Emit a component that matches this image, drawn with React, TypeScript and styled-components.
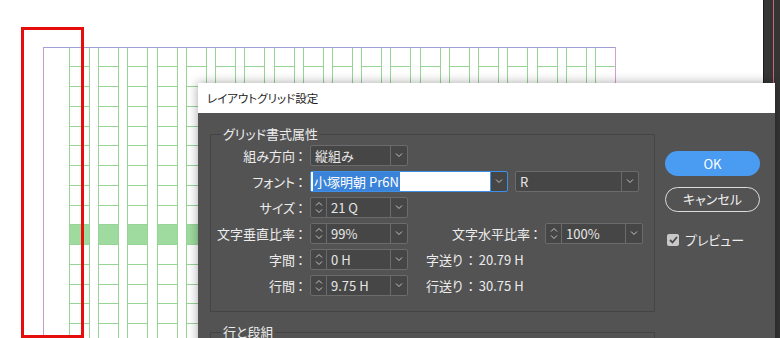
import React from 'react';
import styled, {createGlobalStyle} from 'styled-components';

const GlobalStyle = createGlobalStyle`
  html, body {
    margin: 0;
    padding: 0;
    background: #fff;
  }
  body {
    font-family: "Noto Sans CJK JP", "Noto Sans", sans-serif;
  }
`;

const Stage = styled.div`
  position: relative;
  display: flex;
  width: 780px;
  height: 338px;
  overflow: hidden;
  background: #fff;
`;

const Canvas = styled.svg`
  display: block;
  flex: 0 0 763px;
  height: 338px;
`;

const Rail = styled.div`
  flex: 1;
  display: flex;
  padding-left: 9px;
  background: #353535;
  border-left: 1px solid #1b1b1b;
`;

const RailLine = styled.div`
  width: 1px;
  background: #c56a7c;
`;

const Dialog = styled.div`
  position: absolute;
  left: 198px;
  top: 83px;
  width: 577px;
  height: 290px;
  background: #535353;
  box-shadow: 0 0 10px rgba(0, 0, 0, .35);
  font-feature-settings: "palt";
  color: #ececec;
`;

const TitleBar = styled.div`
  height: 30px;
  padding-left: 9px;
  background: #fff;
  color: #1e1e1e;
  font-size: 11.5px;
  line-height: 30px;
`;

const Body = styled.div`
  display: flex;
  padding-left: 12px;
`;

const Main = styled.div`
  width: 445px;
`;

const Side = styled.div`
  display: flex;
  flex-direction: column;
  width: 95px;
  margin-left: 10px;
  padding-top: 38px;
`;

interface GroupProps {
  $top: number
}

const Group = styled.fieldset<GroupProps>`
  margin: ${p => p.$top}px 0 0;
  padding: 0 0 15px;
  min-width: 0;
  border: 1px solid #444;
  border-radius: 1px;
`;

const Legend = styled.legend`
  margin-left: 10px;
  padding: 0 2px;
  font-size: 13px;
  line-height: 16px;
  color: #ececec;
`;

const Rows = styled.div`
  display: flex;
  flex-direction: column;
  gap: 5px;
  padding-top: 3px;
`;

const Row = styled.div`
  display: flex;
  align-items: center;
  height: 21px;
`;

interface LabelProps {
  $width?: number
}

const Label = styled.div<LabelProps>`
  box-sizing: border-box;
  width: ${p => p.$width ?? 99}px;
  padding-right: 4px;
  text-align: right;
  font-size: 13px;
  white-space: nowrap;
`;

interface ColonProps {
  $wide?: boolean
}

const Colon = styled.span<ColonProps>`
  display: inline-block;
  width: ${p => p.$wide ? 16 : 11}px;
  text-align: center;
`;

const Info = styled.div`
  margin-left: 18px;
  font-size: 13px;
  white-space: nowrap;
`;

interface FieldProps {
  $width: number
  $focus?: boolean
  $gap?: number
}

const Field = styled.div<FieldProps>`
  box-sizing: border-box;
  display: flex;
  width: ${p => p.$width}px;
  height: 21px;
  margin-left: ${p => p.$gap ?? 0}px;
  background: #464646;
  border: 1px solid ${p => p.$focus ? '#3d8fe8' : '#6b6b6b'};
  border-radius: 2px;
`;

const Spin = styled.div`
  display: flex;
  flex-direction: column;
  justify-content: center;
  align-items: center;
  gap: 3px;
  width: 15px;
  border-right: 1px solid #6b6b6b;
`;

interface ValueProps {
  $focus?: boolean
}

const Value = styled.div<ValueProps>`
  flex: 1;
  padding-left: ${p => p.$focus ? 2 : 4}px;
  background: ${p => p.$focus ? '#fff' : 'transparent'};
  font-size: 13px;
  line-height: 19px;
  color: #e6e6e6;
  white-space: nowrap;
  overflow: hidden;
`;

const Selected = styled.span`
  padding: 1px 1px;
  background: #3a83d9;
  color: #fff;
`;

interface DropProps {
  $focus?: boolean
}

const Drop = styled.div<DropProps>`
  display: flex;
  align-items: center;
  justify-content: center;
  width: 16px;
  border-left: 1px solid ${p => p.$focus ? '#3d8fe8' : '#6b6b6b'};
`;

const PrimaryButton = styled.div`
  height: 25px;
  border-radius: 13px;
  background: #4a9cf2;
  color: #fff;
  font-size: 13px;
  line-height: 25px;
  text-align: center;
`;

const OutlineButton = styled.div`
  box-sizing: border-box;
  height: 25px;
  margin-top: 11px;
  border: 1.5px solid #dcdcdc;
  border-radius: 13px;
  color: #f0f0f0;
  font-size: 13px;
  line-height: 22px;
  text-align: center;
`;

const CheckRow = styled.div`
  display: flex;
  align-items: center;
  gap: 6px;
  margin-top: 18px;
  padding-left: 2px;
  font-size: 13px;
`;

const CheckBox = styled.div`
  display: flex;
  align-items: center;
  justify-content: center;
  width: 12px;
  height: 12px;
  border-radius: 2px;
  background: #c8c8c8;
`;

const Chevron = ({up}: {up?: boolean}) => (
  <svg width="8" height="5" viewBox="0 0 8 5">
    <path d={up ? 'M1 4.5 L4 1.5 L7 4.5' : 'M1 0.5 L4 3.5 L7 0.5'} fill="none" stroke="#c4c4c4" strokeWidth="1"/>
  </svg>
);

const Select = ({width, value, gap, focus}: {width: number, value: string, gap?: number, focus?: boolean}) => (
  <Field $width={width} $gap={gap} $focus={focus}>
    <Value $focus={focus}>{focus ? <Selected>{value}</Selected> : value}</Value>
    <Drop $focus={focus}><Chevron/></Drop>
  </Field>
);

const Spinner = ({value}: {value: string}) => (
  <Field $width={98}>
    <Spin><Chevron up/><Chevron/></Spin>
    <Value>{value}</Value>
    <Drop><Chevron/></Drop>
  </Field>
);

const FieldLabel = ({text, width}: {text: string, width?: number}) => (
  <Label $width={width}>{text}<Colon>：</Colon></Label>
);

const COLS = 19;
const COL_X = 69;
const COL_W = 20;
const PITCH = 29.22;
const ROW_Y = 46.6;
const ROW_H = 19.75;
const ROWS = 15;

const Page = () => {
  const cols = Array.from({length: COLS}, (_, i) => Math.round(COL_X + i * PITCH));
  const rows = Array.from({length: ROWS}, (_, k) => Math.round(ROW_Y + (k + 1) * ROW_H));
  const hiTop = Math.round(ROW_Y + 9 * ROW_H);
  const hiBottom = Math.round(ROW_Y + 10 * ROW_H);
  return (
    <Canvas viewBox="0 0 763 338">
      {cols.map(x => (
        <rect key={'h' + x} x={x} y={hiTop} width={COL_W} height={hiBottom - hiTop} fill="#9fdb9f"/>
      ))}
      <g stroke="#97d597" strokeWidth="1" fill="none">
        {cols.map(x => (
          <g key={x}>
            <line x1={x + 0.5} y1={47} x2={x + 0.5} y2={338}/>
            <line x1={x + COL_W + 0.5} y1={47} x2={x + COL_W + 0.5} y2={338}/>
            {rows.map(y => (
              <line key={y} x1={x} y1={y + 0.5} x2={x + COL_W + 1} y2={y + 0.5}/>
            ))}
          </g>
        ))}
      </g>
      <line x1={43} y1={47.5} x2={616} y2={47.5} stroke="#9f9fd6"/>
      <line x1={43.5} y1={47} x2={43.5} y2={338} stroke="#c49ccb"/>
      <line x1={615.5} y1={47} x2={615.5} y2={338} stroke="#d49dd4"/>
      <rect x={22.5} y={28.5} width={60} height={308} fill="none" stroke="#e60d0d" strokeWidth="3"/>
    </Canvas>
  );
};

export default function App() {
  return (
    <Stage>
      <GlobalStyle/>
      <Page/>
      <Rail><RailLine/></Rail>
      <Dialog>
        <TitleBar>レイアウトグリッド設定</TitleBar>
        <Body>
          <Main>
            <Group $top={13}>
              <Legend>グリッド書式属性</Legend>
              <Rows>
                <Row>
                  <FieldLabel text="組み方向"/>
                  <Select width={98} value="縦組み"/>
                </Row>
                <Row>
                  <FieldLabel text="フォント"/>
                  <Select width={198} value="小塚明朝 Pr6N" focus/>
                  <Select width={124} value="R" gap={7}/>
                </Row>
                <Row>
                  <FieldLabel text="サイズ"/>
                  <Spinner value="21 Q"/>
                </Row>
                <Row>
                  <FieldLabel text="文字垂直比率"/>
                  <Spinner value="99%"/>
                  <FieldLabel text="文字水平比率" width={137}/>
                  <Spinner value="100%"/>
                </Row>
                <Row>
                  <FieldLabel text="字間"/>
                  <Spinner value="0 H"/>
                  <Info>字送り<Colon $wide>：</Colon>20.79 H</Info>
                </Row>
                <Row>
                  <FieldLabel text="行間"/>
                  <Spinner value="9.75 H"/>
                  <Info>行送り<Colon $wide>：</Colon>30.75 H</Info>
                </Row>
              </Rows>
            </Group>
            <Group $top={12}>
              <Legend>行と段組</Legend>
              <Rows/>
            </Group>
          </Main>
          <Side>
            <PrimaryButton>OK</PrimaryButton>
            <OutlineButton>キャンセル</OutlineButton>
            <CheckRow>
              <CheckBox>
                <svg width="9" height="8" viewBox="0 0 9 8">
                  <path d="M1 4 L3.5 6.5 L8 1" fill="none" stroke="#4a4a4a" strokeWidth="1.8"/>
                </svg>
              </CheckBox>
              プレビュー
            </CheckRow>
          </Side>
        </Body>
      </Dialog>
    </Stage>
  );
}
